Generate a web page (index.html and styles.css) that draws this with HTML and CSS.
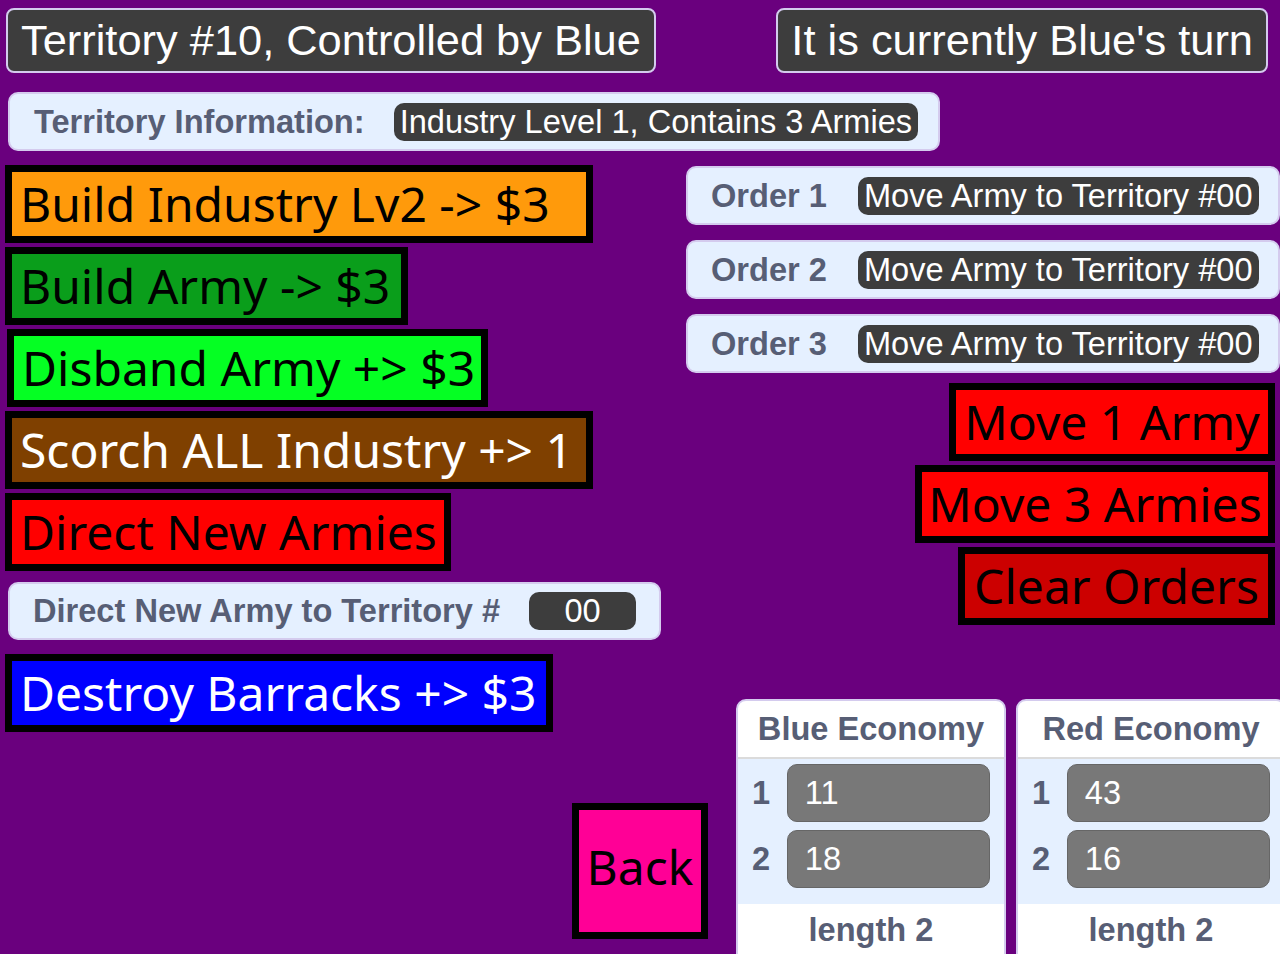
FILE: index.html
```html
<!DOCTYPE html>
<html>
<head>
<meta charset="utf-8">
<link rel="stylesheet" href="styles.css">
</head>
<body>
<div class="stage">
  <div class="top">
    <div class="title">Territory #10, Controlled by Blue</div>
    <div class="title">It is currently Blue's turn</div>
  </div>
  <div class="monitor info">
    <span class="label">Territory Information:</span>
    <span class="pill">Industry Level 1, Contains 3 Armies</span>
  </div>
  <div class="main">
    <div class="left">
      <div class="btn b-industry">Build Industry Lv2 -&gt; $3</div>
      <div class="btn b-army">Build Army -&gt; $3</div>
      <div class="btn b-disband">Disband Army +&gt; $3</div>
      <div class="btn b-scorch">Scorch ALL Industry +&gt; 1</div>
      <div class="btn b-direct">Direct New Armies</div>
      <div class="monitor direct">
        <span class="label">Direct New Army to Territory #</span>
        <span class="pill pill-num">00</span>
      </div>
      <div class="btn b-destroy">Destroy Barracks +&gt; $3</div>
    </div>
    <div class="right">
      <div class="monitor order">
        <span class="label">Order 1</span>
        <span class="pill">Move Army to Territory #00</span>
      </div>
      <div class="monitor order">
        <span class="label">Order 2</span>
        <span class="pill">Move Army to Territory #00</span>
      </div>
      <div class="monitor order">
        <span class="label">Order 3</span>
        <span class="pill">Move Army to Territory #00</span>
      </div>
      <div class="btn b-move1">Move 1 Army</div>
      <div class="btn b-move3">Move 3 Armies</div>
      <div class="btn b-clear">Clear Orders</div>
      <div class="bottom">
        <div class="btn b-back">Back</div>
        <div class="list">
          <div class="list-head">Blue Economy</div>
          <div class="list-body">
            <div class="item"><span class="idx">1</span><span class="val">11</span></div>
            <div class="item"><span class="idx">2</span><span class="val">18</span></div>
          </div>
          <div class="list-foot">length 2</div>
        </div>
        <div class="list">
          <div class="list-head">Red Economy</div>
          <div class="list-body">
            <div class="item"><span class="idx">1</span><span class="val">43</span></div>
            <div class="item"><span class="idx">2</span><span class="val">16</span></div>
          </div>
          <div class="list-foot">length 2</div>
        </div>
      </div>
    </div>
  </div>
</div>
</body>
</html>
```
FILE: styles.css
```css
html, body {
  margin: 0;
  padding: 0;
}
body {
  background: #6a007e;
  width: 1280px;
  height: 954px;
  overflow: hidden;
  font-family: "Liberation Sans", Arial, sans-serif;
}
.stage {
  width: 1280px;
  height: 954px;
  overflow: hidden;
}
.top {
  display: flex;
  justify-content: space-between;
  padding: 8px 12px 0 6px;
}
.title {
  box-sizing: border-box;
  height: 65px;
  background: #3d3d3d;
  border: 2px solid #d4cbee;
  border-radius: 8px;
  color: #fff;
  font-size: 43.4px;
  padding: 0 13px;
  display: flex;
  align-items: center;
  white-space: nowrap;
}
.monitor {
  box-sizing: border-box;
  background: #e5f0ff;
  border: 2px solid #d4cbee;
  border-radius: 10px;
  display: flex;
  align-items: center;
  white-space: nowrap;
}
.label {
  font-weight: bold;
  color: #575e75;
  font-size: 32.6px;
}
.pill {
  box-sizing: border-box;
  background: #3d3d3d;
  color: #fff;
  font-size: 32.6px;
  height: 38px;
  line-height: 38px;
  border-radius: 10px;
  padding: 0 6px;
}
.info {
  margin: 19px 0 0 8px;
  width: 932px;
  height: 59px;
  padding: 0 0 0 24px;
}
.info .pill {
  margin-left: 29px;
}
.main {
  display: flex;
  margin-top: 14px;
}
.left {
  width: 572px;
  flex: none;
  min-width: 0;
  display: flex;
  flex-direction: column;
  align-items: flex-start;
  padding-left: 5px;
  box-sizing: border-box;
}
.right {
  flex: 1;
  min-width: 0;
  display: flex;
  flex-direction: column;
  align-items: flex-end;
}
.btn {
  box-sizing: border-box;
  height: 78px;
  border: 7px solid #000;
  font-family: "Noto Sans", sans-serif;
  font-size: 48px;
  color: #000;
  display: flex;
  align-items: center;
  padding: 0 0 2px 8px;
  white-space: nowrap;
  flex: none;
}
.left .btn + .btn {
  margin-top: 4px;
}
.b-industry { width: 588px; background: #ff9a0b; }
.b-army { width: 403px; background: #0a9e1b; }
.b-disband { width: 481px; background: #05ff23; margin-left: 2px; }
.b-scorch { width: 588px; background: #7f4000; color: #fff; }
.b-direct { width: 446px; background: #ff0000; }
.b-destroy { width: 548px; background: #0000ff; color: #fff; margin-top: 14px; }
.direct {
  width: 653px;
  height: 58px;
  margin: 11px 0 0 3px;
  padding-left: 23px;
  flex: none;
}
.direct .pill {
  margin-left: 29px;
  width: 107px;
  text-align: center;
}
.order {
  width: 594px;
  height: 59px;
  padding-left: 23px;
  margin-top: 1px;
}
.order + .order {
  margin-top: 15px;
}
.order .pill {
  margin-left: 31px;
}
.b-move1, .b-move3, .b-clear {
  margin-right: 5px;
  background: #ff0000;
  justify-content: center;
  padding-left: 0;
}
.b-move1 { width: 326px; margin-top: 10px; }
.b-move3 { width: 360px; margin-top: 4px; }
.b-clear { width: 317px; margin-top: 4px; background: #cc0000; }
.bottom {
  align-self: stretch;
  display: flex;
  align-items: flex-start;
  margin-top: 74px;
}
.b-back {
  width: 136px;
  height: 136px;
  margin-top: 104px;
  background: #ff0096;
  justify-content: center;
  padding: 0 0 10px 0;
}
.list {
  box-sizing: border-box;
  width: 270px;
  flex: none;
  margin-left: 28px;
  border: 2px solid #d4cbee;
  border-radius: 10px 10px 0 0;
  background: #fff;
  overflow: hidden;
}
.list + .list {
  margin-left: 10px;
}
.list-head {
  height: 56px;
  display: flex;
  align-items: center;
  justify-content: center;
  font-weight: bold;
  font-size: 32.6px;
  color: #575e75;
  border-bottom: 2px solid #dbdbdb;
}
.list-body {
  background: #e5f0ff;
  padding: 5px 14px 16px 14px;
  display: flex;
  flex-direction: column;
  gap: 8px;
}
.item {
  display: flex;
  align-items: center;
}
.idx {
  width: 35px;
  font-weight: bold;
  font-size: 32.6px;
  color: #575e75;
}
.val {
  box-sizing: border-box;
  width: 204px;
  height: 58px;
  background: #787878;
  border: 1px solid #666;
  border-radius: 10px;
  color: #fff;
  font-size: 32.6px;
  display: flex;
  align-items: center;
  padding-left: 17px;
}
.list-foot {
  height: 52px;
  display: flex;
  align-items: center;
  justify-content: center;
  font-weight: bold;
  font-size: 32.6px;
  color: #575e75;
}
```
